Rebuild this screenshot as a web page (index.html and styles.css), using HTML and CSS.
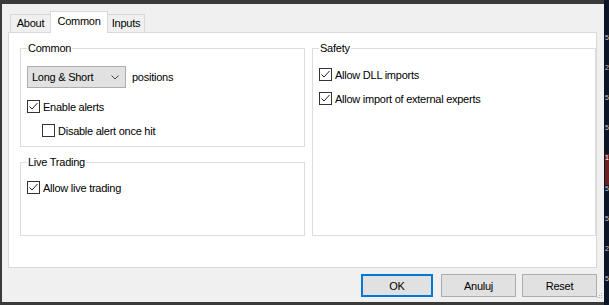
FILE: index.html
```html
<!DOCTYPE html>
<html>
	<head>
		<title>Expert properties</title>
		<meta charset="UTF-8">
		<link rel="stylesheet" href="styles.css">
	</head>
	<body>
		<div class="window">
			<div class="tabs">
				<div class="tab tab_about">About</div>
				<div class="tab tab_common active">Common</div>
				<div class="tab tab_inputs">Inputs</div>
			</div>

			<div class="panel">
				<div class="groups">
					<div class="col">
						<fieldset class="group group_common">
							<legend>Common</legend>
							<div class="select_row">
								<div class="select">
									<span>Long &amp; Short</span>
									<svg width="8" height="5" viewBox="0 0 8 5"><polyline points="0.5,0.5 4,4 7.5,0.5" fill="none" stroke="#444" stroke-width="1"/></svg>
								</div>
								<span>positions</span>
							</div>
							<label class="check first"><span class="box"><svg width="11" height="11" viewBox="0 0 11 11"><polyline points="1.5,5.5 4,8 9.5,2" fill="none" stroke="#222" stroke-width="1"/></svg></span>Enable alerts</label>
							<label class="check second indent"><span class="box"></span>Disable alert once hit</label>
						</fieldset>

						<fieldset class="group group_live">
							<legend>Live Trading</legend>
							<label class="check first"><span class="box"><svg width="11" height="11" viewBox="0 0 11 11"><polyline points="1.5,5.5 4,8 9.5,2" fill="none" stroke="#222" stroke-width="1"/></svg></span>Allow live trading</label>
						</fieldset>
					</div>

					<fieldset class="group group_safety">
						<legend>Safety</legend>
						<label class="check first"><span class="box"><svg width="11" height="11" viewBox="0 0 11 11"><polyline points="1.5,5.5 4,8 9.5,2" fill="none" stroke="#222" stroke-width="1"/></svg></span>Allow DLL imports</label>
						<label class="check second"><span class="box"><svg width="11" height="11" viewBox="0 0 11 11"><polyline points="1.5,5.5 4,8 9.5,2" fill="none" stroke="#222" stroke-width="1"/></svg></span>Allow import of external experts</label>
					</fieldset>
				</div>
			</div>

			<div class="buttons">
				<button type="button" class="btn btn_ok">OK</button>
				<button type="button" class="btn">Anuluj</button>
				<button type="button" class="btn">Reset</button>
			</div>

			<svg class="grip" width="6" height="6" viewBox="0 0 6 6">
				<rect x="4" y="0" width="1" height="1" fill="#b0b0b0"/>
				<rect x="2" y="2" width="1" height="1" fill="#b0b0b0"/>
				<rect x="4" y="2" width="1" height="1" fill="#b0b0b0"/>
				<rect x="0" y="4" width="1" height="1" fill="#b0b0b0"/>
				<rect x="2" y="4" width="1" height="1" fill="#b0b0b0"/>
				<rect x="4" y="4" width="1" height="1" fill="#b0b0b0"/>
			</svg>
		</div>

		<div class="axis">
			<span>5</span>
			<span>2</span>
			<span>5</span>
			<span>5</span>
			<span class="mark">1</span>
			<span>5</span>
			<span>5</span>
			<span>2</span>
			<span>5</span>
		</div>
	</body>
</html>
```

FILE: styles.css
```css
* {
	box-sizing: border-box;
}
html, body {
	margin: 0;
	height: 100%;
}
body {
	display: flex;
	padding-left: 2px;
	background: #3a3a3a;
	font-family: "Liberation Sans", Arial, sans-serif;
	font-size: 11px;
	letter-spacing: -0.25px;
	color: #000;
	overflow: hidden;
}

.window {
	position: relative;
	display: flex;
	flex-direction: column;
	width: 602px;
	height: 298px;
	margin-top: 4px;
	padding: 7px 7px 5px 6px;
	background: #f0f0f0;
}

/* tabs */
.tabs {
	display: flex;
	align-items: flex-end;
	height: 21px;
	padding-left: 2px;
}
.tab {
	height: 18px;
	border: 1px solid #d9d9d9;
	border-bottom: none;
	background: #f0f0f0;
	line-height: 17px;
	text-align: center;
}
.tab + .tab {
	margin-left: -1px;
}
.tab_about {
	width: 41px;
}
.tab_common {
	width: 58px;
}
.tab_inputs {
	width: 38px;
}
.tab.active {
	position: relative;
	z-index: 1;
	height: 22px;
	margin-bottom: -1px;
	background: #fff;
	line-height: 18px;
}

.panel {
	height: 236px;
	border: 1px solid #d9d9d9;
	background: #fff;
	padding: 8px 0 0 11px;
}
.groups {
	display: grid;
	grid-template-columns: 285px 284px;
	column-gap: 7px;
	height: 195px;
}
.col {
	display: flex;
	flex-direction: column;
	gap: 8px;
}

.group {
	margin: 0;
	min-width: 0;
	border: 1px solid #dcdcdc;
	padding: 0 6px;
}
.group legend {
	padding: 0 1px;
	line-height: 14px;
}
.group_common {
	padding-bottom: 8px;
}
.group_live {
	flex: 1;
}

.select_row {
	display: flex;
	align-items: center;
	gap: 6px;
	margin-top: 11px;
}
.select {
	display: flex;
	align-items: center;
	justify-content: space-between;
	width: 99px;
	height: 22px;
	padding: 0 6px 0 4px;
	border: 1px solid #adadad;
	background: #e1e1e1;
}

.check {
	display: flex;
	align-items: center;
	gap: 3px;
	height: 15px;
}
.check.first {
	margin-top: 11px;
}
.group_safety .check.first {
	margin-top: 12px;
}
.check.second {
	margin-top: 9px;
}
.check.indent {
	margin-left: 15px;
}
.box {
	flex: none;
	display: flex;
	width: 13px;
	height: 13px;
	border: 1px solid #333;
	background: #fff;
}

/* bottom buttons */
.buttons {
	display: flex;
	justify-content: flex-end;
	gap: 6px;
	margin-top: 6px;
}
.btn {
	width: 75px;
	height: 23px;
	padding: 0;
	border: 1px solid #adadad;
	background: #e1e1e1;
	font: inherit;
	letter-spacing: inherit;
	color: #000;
}
.btn_ok {
	width: 72px;
	margin-right: 2px;
	border-color: #0078d7;
	box-shadow: inset 0 0 0 1px #0078d7;
}
.grip {
	position: absolute;
	right: 1px;
	bottom: 3px;
}

/* chart price scale peeking at the right */
.axis {
	flex: 1;
	display: flex;
	flex-direction: column;
	padding: 34px 0 0 1px;
	background: #0b1526;
	color: #c8ccd4;
	font-size: 7px;
	letter-spacing: 0;
	overflow: hidden;
}
.axis span {
	height: 32.5px;
	line-height: 8px;
}
.axis .mark {
	align-self: flex-start;
	background: #6e2020;
	color: #fff;
}
```
